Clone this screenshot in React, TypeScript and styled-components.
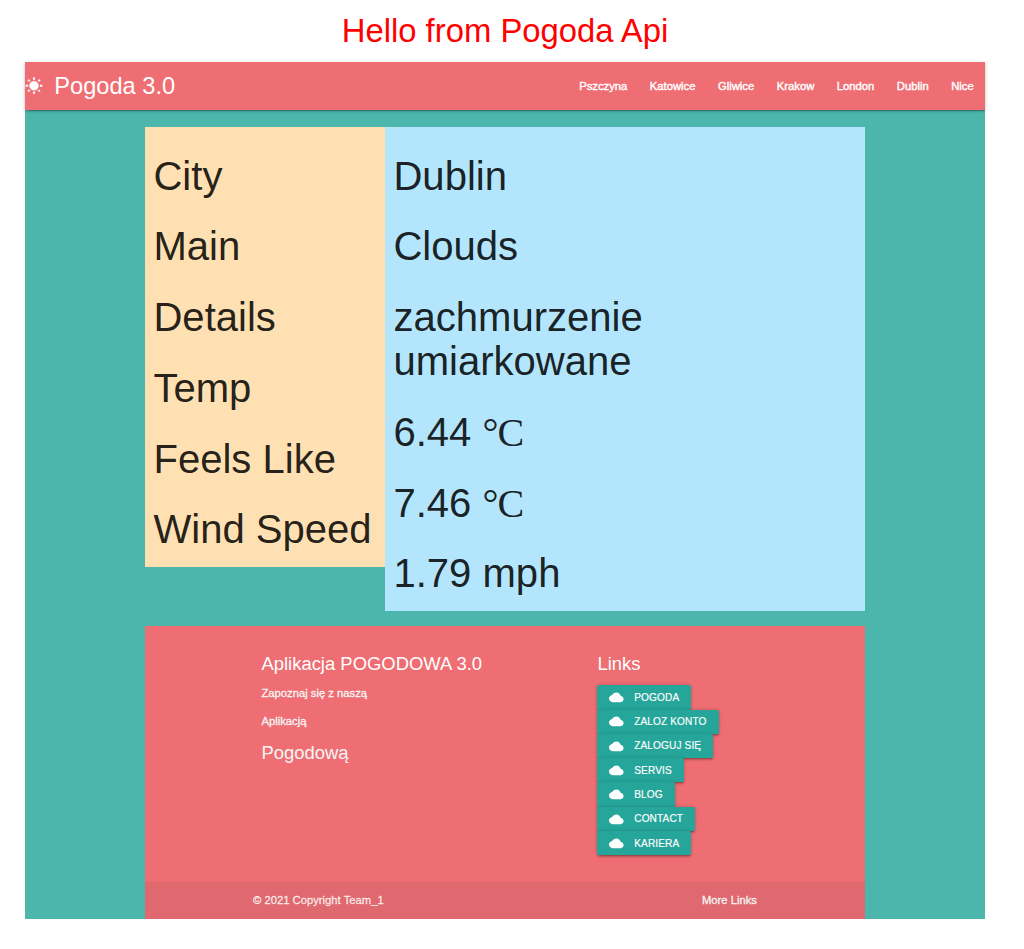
import React from 'react';
import styled, { createGlobalStyle } from 'styled-components';

const GlobalStyle = createGlobalStyle`
  *, *::before, *::after { box-sizing: border-box; }
  html { background: #fff; }
  body {
    margin: 0;
    font-family: "Liberation Sans", Arial, sans-serif;
    font-size: 11.25px;
    line-height: 1.5;
    color: rgba(0, 0, 0, 0.87);
  }
`;

const Page = styled.div`
  width: 960px;
  margin-left: 25px;
  padding-top: 12px;
`;

const Greeting = styled.h1`
  margin: 0 0 13px;
  font-size: 32.85px;
  line-height: 37px;
  font-weight: 400;
  text-align: center;
  color: #f00;
`;

const Shell = styled.div`
  background: #4db6ac;
`;

const Nav = styled.nav`
  display: flex;
  justify-content: space-between;
  align-items: center;
  height: 48px;
  background: #ee6e73;
  color: #fff;
  box-shadow: 0 1.5px 1.5px 0 rgba(0, 0, 0, 0.14), 0 2.25px 0.75px -1.5px rgba(0, 0, 0, 0.12),
    0 0.75px 3.75px 0 rgba(0, 0, 0, 0.2);
`;

const Brand = styled.a`
  display: flex;
  align-items: center;
  gap: 11.25px;
  font-size: 23.63px;
  line-height: 48px;
`;

const NavLinks = styled.ul`
  display: flex;
  margin: 0;
  padding: 0;
  list-style: none;
`;

const NavLink = styled.li`
  padding: 0 11.25px;
  line-height: 48px;
  -webkit-text-stroke: 0.4px currentColor;
`;

const Content = styled.div`
  width: 720px;
  margin: 0 auto;
  padding-top: 17px;
`;

const Report = styled.div`
  display: flex;
  align-items: flex-start;
  margin-bottom: 15px;
`;

const Panel = styled.section<{ $width: number; $bg: string }>`
  display: flex;
  flex-direction: column;
  gap: 26.66px;
  width: ${(p) => p.$width}px;
  padding: 26.72px 8.44px 16.08px;
  background: ${(p) => p.$bg};
`;

const Entry = styled.h2`
  margin: 0;
  font-size: 40.05px;
  line-height: 44.05px;
  font-weight: 400;
`;

const Unit = styled.span`
  font-family: "Liberation Serif", "Times New Roman", serif;
  letter-spacing: -1px;
  line-height: 0;
`;

const Footer = styled.footer`
  background: #ee6e73;
  color: #fff;
`;

const FooterColumns = styled.div`
  display: flex;
  width: 504px;
  height: 256px;
  margin: 0 auto;
  padding: 27.3px 8.44px 0;
`;

const Column = styled.div<{ $width?: number }>`
  width: ${(p) => (p.$width ? `${p.$width}px` : 'auto')};
`;

const Heading = styled.h5<{ $soft?: boolean }>`
  margin: 0 0 11.25px;
  font-size: 18.45px;
  line-height: 20.3px;
  font-weight: 400;
  color: ${(p) => (p.$soft ? '#f5f5f5' : '#fff')};
`;

const Paragraph = styled.p`
  margin: 0 0 11.25px;
  color: #f5f5f5;
  -webkit-text-stroke: 0.3px currentColor;

  & + h5 { margin-top: 12.3px; }
`;

const LinkList = styled.ul`
  display: flex;
  flex-direction: column;
  align-items: flex-start;
  margin: 0;
  padding: 0;
  list-style: none;
`;

const LinkButton = styled.li`
  display: flex;
  align-items: center;
  gap: 10.2px;
  height: 24.3px;
  padding: 0 12px;
  border-radius: 1.5px;
  background: #26a69a;
  color: #fff;
  font-size: 10.1px;
  letter-spacing: 0.12px;
  text-transform: uppercase;
  -webkit-text-stroke: 0.15px currentColor;
  box-shadow: 0 1.5px 1.5px 0 rgba(0, 0, 0, 0.14), 0 2.25px 0.75px -1.5px rgba(0, 0, 0, 0.12),
    0 0.75px 3.75px 0 rgba(0, 0, 0, 0.2);
`;

const Copyright = styled.div`
  background: rgba(51, 51, 51, 0.08);
`;

const CopyrightRow = styled.div`
  display: flex;
  justify-content: space-between;
  width: 504px;
  height: 37px;
  padding-top: 9.4px;
  margin: 0 auto;
  color: rgba(255, 255, 255, 0.8);
  -webkit-text-stroke: 0.3px currentColor;
`;

const MoreLinks = styled.a`
  color: #f5f5f5;
`;

const SunIcon = () => (
  <svg width="18" height="18" viewBox="0 0 24 24" fill="currentColor">
    <path d="M6.76 4.84l-1.8-1.79-1.41 1.41 1.79 1.79 1.42-1.41zM4 10.5H1v2h3v-2zm9-9.95h-2V3.5h2V.55zm7.45 3.91l-1.41-1.41-1.79 1.79 1.41 1.41 1.79-1.79zm-3.21 13.7l1.79 1.8 1.41-1.41-1.8-1.79-1.4 1.4zM20 10.5v2h3v-2h-3zm-8-5c-3.31 0-6 2.69-6 6s2.69 6 6 6 6-2.69 6-6-2.69-6-6-6zm-1 16.95h2V19.5h-2v2.95zm-7.45-3.91l1.41 1.41 1.79-1.8-1.41-1.41-1.79 1.8z" stroke="currentColor" strokeWidth="0.5" />
  </svg>
);

const CloudIcon = () => (
  <svg width="14.6" height="14.6" viewBox="0 0 24 24" fill="currentColor">
    <path d="M19.35 10.04C18.67 6.59 15.64 4 12 4 9.11 4 6.6 5.64 5.35 8.04 2.34 8.36 0 10.91 0 14c0 3.31 2.69 6 6 6h13c2.76 0 5-2.24 5-5 0-2.64-2.05-4.78-4.65-4.96z" />
  </svg>
);

const cities = ['Pszczyna', 'Katowice', 'Gliwice', 'Krakow', 'London', 'Dublin', 'Nice'];
const labels = ['City', 'Main', 'Details', 'Temp', 'Feels Like', 'Wind Speed'];
const links = ['Pogoda', 'Zaloz konto', 'Zaloguj się', 'Servis', 'Blog', 'Contact', 'Kariera'];

export default function App() {
  return (
    <>
      <GlobalStyle />
      <Page>
        <Greeting>Hello from Pogoda Api</Greeting>
        <Shell>
          <Nav>
            <Brand>
              <SunIcon />
              Pogoda 3.0
            </Brand>
            <NavLinks>
              {cities.map((city) => (
                <NavLink key={city}>{city}</NavLink>
              ))}
            </NavLinks>
          </Nav>
          <Content>
            <Report>
              <Panel $width={240} $bg="#ffe0b2">
                {labels.map((label) => (
                  <Entry key={label}>{label}</Entry>
                ))}
              </Panel>
              <Panel $width={480} $bg="#b3e5fc">
                <Entry>Dublin</Entry>
                <Entry>Clouds</Entry>
                <Entry>zachmurzenie umiarkowane</Entry>
                <Entry>6.44 <Unit>°C</Unit></Entry>
                <Entry>7.46 <Unit>°C</Unit></Entry>
                <Entry>1.79 mph</Entry>
              </Panel>
            </Report>
            <Footer>
              <FooterColumns>
                <Column $width={336}>
                  <Heading>Aplikacja POGODOWA 3.0</Heading>
                  <Paragraph>Zapoznaj się z naszą</Paragraph>
                  <Paragraph>Aplikacją</Paragraph>
                  <Heading $soft>Pogodową</Heading>
                </Column>
                <Column>
                  <Heading>Links</Heading>
                  <LinkList>
                    {links.map((link) => (
                      <LinkButton key={link}>
                        <CloudIcon />
                        {link}
                      </LinkButton>
                    ))}
                  </LinkList>
                </Column>
              </FooterColumns>
              <Copyright>
                <CopyrightRow>
                  <span>© 2021 Copyright Team_1</span>
                  <MoreLinks>More Links</MoreLinks>
                </CopyrightRow>
              </Copyright>
            </Footer>
          </Content>
        </Shell>
      </Page>
    </>
  );
}
